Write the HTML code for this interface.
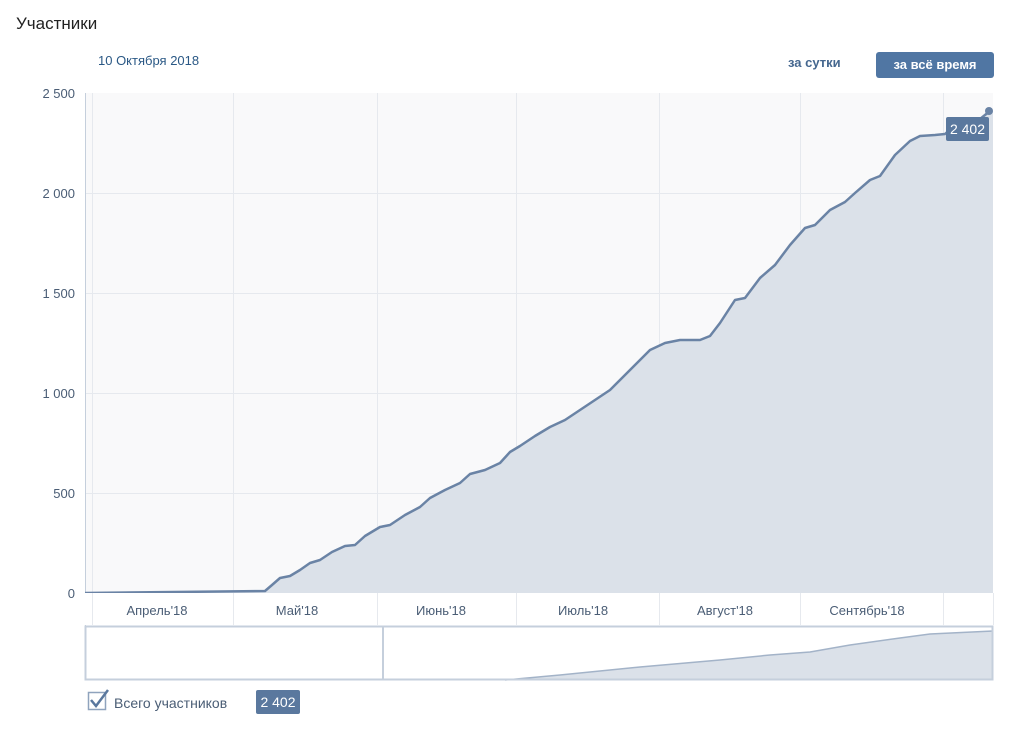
<!DOCTYPE html>
<html><head><meta charset="utf-8"><style>
body{margin:0;width:1030px;height:738px;background:#fff;font-family:"Liberation Sans",sans-serif;position:relative;overflow:hidden}
.a{position:absolute}
.yl{position:absolute;right:955px;font-size:13px;color:#4a5d75;width:60px;text-align:right}
.ml{position:absolute;top:603px;font-size:13px;color:#4a5d75;width:120px;text-align:center}
</style></head><body>
<div class="a" style="left:16px;top:14px;font-size:17px;color:#222">Участники</div>
<div class="a" style="left:98px;top:53px;font-size:13px;color:#2a5885">10 Октября 2018</div>
<div class="a" style="left:788px;top:55px;font-size:13px;font-weight:bold;color:#45678f">за сутки</div>
<div class="a" style="left:876px;top:52px;width:118px;height:26px;background:#5076a3;border-radius:3px;color:#fff;font-size:13px;font-weight:bold;line-height:25px;text-align:center">за всё время</div>
<div class="yl" style="top:86px">2 500</div>
<div class="yl" style="top:186px">2 000</div>
<div class="yl" style="top:286px">1 500</div>
<div class="yl" style="top:386px">1 000</div>
<div class="yl" style="top:486px">500</div>
<div class="yl" style="top:586px">0</div>
<svg class="a" style="left:0;top:0" width="1030" height="738">
<rect x="85" y="93" width="908" height="500" fill="#f9f9fa"/>
<g stroke="#e6e9ee" stroke-width="1">
<line x1="85" y1="193.5" x2="993" y2="193.5"/><line x1="85" y1="293.5" x2="993" y2="293.5"/><line x1="85" y1="393.5" x2="993" y2="393.5"/><line x1="85" y1="493.5" x2="993" y2="493.5"/>
<line x1="92.5" y1="93" x2="92.5" y2="625"/><line x1="233.5" y1="93" x2="233.5" y2="625"/><line x1="377.5" y1="93" x2="377.5" y2="625"/><line x1="516.5" y1="93" x2="516.5" y2="625"/><line x1="659.5" y1="93" x2="659.5" y2="625"/><line x1="800.5" y1="93" x2="800.5" y2="625"/><line x1="943.5" y1="93" x2="943.5" y2="625"/>
</g>
<line x1="85.5" y1="93" x2="85.5" y2="680" stroke="#c5cfdc"/>
<path d="M85,593 L265,591 L272,585 L280,578 L290,576 L300,570 L310,563 L320,560 L332,552 L345,546 L355,545 L365,536 L380,527 L390,525 L405,515 L420,507 L430,498 L445,490 L460,483 L470,474 L485,470 L500,463 L510,452 L520,446 L535,436 L550,427 L565,420 L580,410 L595,400 L610,390 L620,380 L635,365 L650,350 L665,343 L680,340 L700,340 L710,336 L720,323 L735,300 L745,298 L760,278 L775,265 L790,245 L805,228 L815,225 L830,210 L845,202 L855,193 L870,180 L880,176 L895,155 L910,141 L920,136 L935,135 L945,134 L955,125 L975,123 L990,111 L993,111 L993,593 Z" fill="#dbe1e9"/>
<path d="M85,593 L265,591 L272,585 L280,578 L290,576 L300,570 L310,563 L320,560 L332,552 L345,546 L355,545 L365,536 L380,527 L390,525 L405,515 L420,507 L430,498 L445,490 L460,483 L470,474 L485,470 L500,463 L510,452 L520,446 L535,436 L550,427 L565,420 L580,410 L595,400 L610,390 L620,380 L635,365 L650,350 L665,343 L680,340 L700,340 L710,336 L720,323 L735,300 L745,298 L760,278 L775,265 L790,245 L805,228 L815,225 L830,210 L845,202 L855,193 L870,180 L880,176 L895,155 L910,141 L920,136 L935,135 L945,134 L955,125 L975,123 L990,111" fill="none" stroke="#6a83a5" stroke-width="2.5" stroke-linejoin="round"/>
<circle cx="989" cy="111" r="4" fill="#6a83a5"/>
<rect x="85" y="593" width="908" height="32" fill="#fff"/>
<g stroke="#e6e9ee"><line x1="92.5" y1="593" x2="92.5" y2="625"/><line x1="233.5" y1="593" x2="233.5" y2="625"/><line x1="377.5" y1="593" x2="377.5" y2="625"/><line x1="516.5" y1="593" x2="516.5" y2="625"/><line x1="659.5" y1="593" x2="659.5" y2="625"/><line x1="800.5" y1="593" x2="800.5" y2="625"/><line x1="943.5" y1="593" x2="943.5" y2="625"/><line x1="993.5" y1="593" x2="993.5" y2="625"/></g>
<path d="M505,680 L560,675 L640,667 L720,660 L770,655 L810,652 L850,645 L900,638 L930,634 L993,631 L993,680 Z" fill="#dbe1e9"/>
<path d="M505,680 L560,675 L640,667 L720,660 L770,655 L810,652 L850,645 L900,638 L930,634 L993,631" fill="none" stroke="#a3b3c8" stroke-width="1.5"/>
<rect x="85.5" y="626.5" width="907" height="53" fill="none" stroke="#c5cfdc" stroke-width="2"/>
<line x1="383" y1="627" x2="383" y2="680" stroke="#c5cfdc" stroke-width="2"/>
<rect x="946" y="117" width="43" height="24" rx="2" fill="#5a789e"/>
<text x="967.5" y="134" fill="#fff" font-size="14" text-anchor="middle" font-family="Liberation Sans">2 402</text>
<rect x="88.5" y="692.5" width="17" height="17" fill="#fff" stroke="#8fa3bd" stroke-width="1.5"/>
<path d="M91,700 L96,706 L108,690" fill="none" stroke="#5a789e" stroke-width="2.5"/>
<rect x="256" y="690" width="44" height="24" rx="2" fill="#5a789e"/>
<text x="278" y="707" fill="#fff" font-size="14" text-anchor="middle" font-family="Liberation Sans">2 402</text>
</svg>
<div class="ml" style="left:97px">Апрель'18</div>
<div class="ml" style="left:237px">Май'18</div>
<div class="ml" style="left:381px">Июнь'18</div>
<div class="ml" style="left:523px">Июль'18</div>
<div class="ml" style="left:665px">Август'18</div>
<div class="ml" style="left:807px">Сентябрь'18</div>
<div class="a" style="left:114px;top:695px;font-size:14px;color:#4a5d75">Всего участников</div>
</body></html>
